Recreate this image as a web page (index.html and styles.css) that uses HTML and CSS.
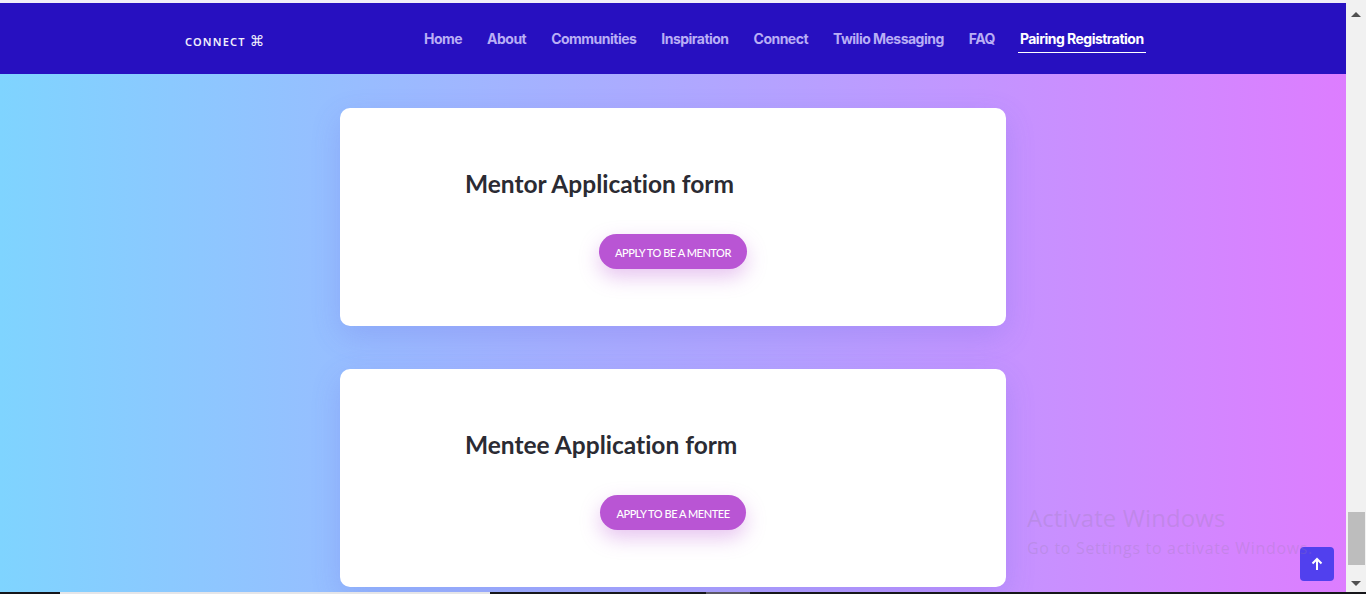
FILE: index.html
```html
<!DOCTYPE html>
<html lang="en">
<head>
<meta charset="utf-8">
<title>Pairing Registration</title>
<link rel="stylesheet" href="styles.css">
</head>
<body>
<div class="window">
  <div class="viewport">
    <header class="topbar">
      <a class="brand">CONNECT <span class="brand-icon">⌘</span></a>
      <nav class="nav">
        <a>Home</a>
        <a>About</a>
        <a>Communities</a>
        <a>Inspiration</a>
        <a>Connect</a>
        <a>Twilio Messaging</a>
        <a>FAQ</a>
        <a class="active">Pairing Registration</a>
      </nav>
    </header>
    <main class="content">
      <section class="card">
        <h2>Mentor Application form</h2>
        <div class="action"><a class="btn">APPLY TO BE A MENTOR</a></div>
      </section>
      <section class="card">
        <h2>Mentee Application form</h2>
        <div class="action"><a class="btn">APPLY TO BE A MENTEE</a></div>
      </section>
    </main>
    <a class="to-top">
      <svg width="14" height="14" viewBox="0 0 14 14" fill="none" stroke="#fff" stroke-width="2"><path d="M7 13V2M2.500 6.500 7 2l4.500 4.500"/></svg>
    </a>
    <div class="watermark">
      <div class="wm-title">Activate Windows</div>
      <div class="wm-sub">Go to Settings to activate Windows.</div>
    </div>
  </div>
  <aside class="scrollbar">
    <span class="arrow up"></span>
    <span class="track"><span class="thumb"></span></span>
    <span class="arrow down"></span>
  </aside>
</div>
<div class="taskbar">
  <span class="seg-dark-a"></span><span class="seg-light"></span><span class="seg-dark-b"></span><span class="seg-grey"></span><span class="seg-dark-c"></span>
</div>
</body>
</html>
```
FILE: styles.css
```css
* { box-sizing: border-box; }
html, body { margin: 0; height: 100%; overflow: hidden; }
body { display: flex; flex-direction: column; background: #1a1a1f; }
.window { display: flex; height: 592px; flex: none; }
.viewport { position: relative; flex: 1; min-width: 0; display: flex; flex-direction: column; overflow: hidden; padding-top: 3px; background: #f1eef8; }
.topbar { flex: none; height: 71px; background: #2710c0; display: flex; padding-left: 185px; }
.brand { font: 600 11px/1 "Noto Sans", sans-serif; letter-spacing: 1.2px; color: #f1effc; width: 237px; padding-top: 31px; white-space: pre; }
.brand-icon { font: 400 14.500px/1 "DejaVu Sans", sans-serif; letter-spacing: 0; }
.nav { display: flex; gap: 21px; padding-top: 26px; align-items: flex-start; }
.nav a { font: 700 14px/20px Inter, sans-serif; letter-spacing: -.52px; color: #b9aef5; padding: 0 2px 3px; border-bottom: 1px solid transparent; white-space: nowrap; }
.nav a.active { color: #fff; border-bottom-color: #fff; }
.content { flex: 1; background: linear-gradient(90deg, #7fd4ff 0%, #dd7dff 100%); display: flex; flex-direction: column; align-items: center; gap: 43px; padding-top: 34px; }
.card { flex: none; width: 666px; height: 218px; background: #fff; border-radius: 10px; box-shadow: 0 10px 30px rgba(90,90,220,.2); padding: 60px 125px 0; }
.card h2 { margin: 0; font: 700 24.500px/32px Lato, sans-serif; font-variant-ligatures: none; color: #2b2b33; }
.action { display: flex; justify-content: center; margin-top: 34px; margin-left: -125px; margin-right: -125px; }
.btn { height: 35px; padding: 0 16px; border-radius: 18px; background: #b955d4; color: #fff; font: 500 11px/37px Lato, sans-serif; font-variant-ligatures: none; letter-spacing: -.45px; box-shadow: 0 8px 20px rgba(185,85,212,.35); white-space: nowrap; }
.watermark { position: absolute; left: 1027px; top: 503px; color: rgba(150,125,165,.25); font-family: "Open Sans", sans-serif; white-space: nowrap; }
.wm-title { font-size: 24px; line-height: 30px; letter-spacing: .1px; }
.wm-sub { font-size: 16px; line-height: 30px; letter-spacing: .68px; }
.to-top { position: absolute; left: 1300px; top: 547px; width: 34px; height: 34px; border-radius: 4px; background: #5140ee; display: flex; align-items: center; justify-content: center; }
.scrollbar { width: 20px; flex: none; background: #f1f1f1; display: flex; flex-direction: column; align-items: center; }
.arrow { flex: none; width: 0; height: 0; border-left: 5px solid transparent; border-right: 5px solid transparent; }
.arrow.up { border-bottom: 5px solid #505050; margin: 12px 0 0; }
.arrow.down { border-top: 5px solid #505050; margin: 0 0 6px; }
.track { flex: 1; align-self: stretch; display: flex; flex-direction: column; justify-content: flex-end; padding: 0 1px 16px 2px; }
.thumb { height: 53px; background: #bdbdbd; }
.taskbar { flex: none; height: 2px; display: flex; }
.taskbar span { height: 2px; }
.seg-dark-a { width: 60px; background: #16161a; }
.seg-light { width: 430px; background: #e5e5e8; }
.seg-dark-b { width: 216px; background: #17171c; }
.seg-grey { width: 44px; background: #5c5866; }
.seg-dark-c { flex: 1; background: #16161a; }
```
